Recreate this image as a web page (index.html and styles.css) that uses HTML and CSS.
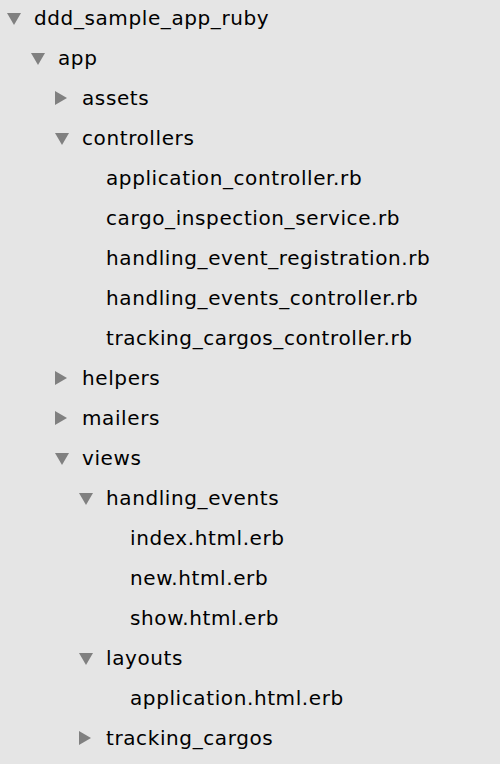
FILE: index.html
```html
<!DOCTYPE html>
<html>
<head>
<meta charset="utf-8">
<link rel="stylesheet" href="styles.css">
</head>
<body>
<ul class="tree">
  <li class="row l0"><svg class="tri" viewBox="0 0 16 16"><polygon points="1,3 15,3 8,15"/></svg><span>ddd_sample_app_ruby</span></li>
  <li class="row l1"><svg class="tri" viewBox="0 0 16 16"><polygon points="1,3 15,3 8,15"/></svg><span>app</span></li>
  <li class="row l2"><svg class="tri" viewBox="0 0 16 16"><polygon points="1,1 13,8 1,15"/></svg><span>assets</span></li>
  <li class="row l2"><svg class="tri" viewBox="0 0 16 16"><polygon points="1,3 15,3 8,15"/></svg><span>controllers</span></li>
  <li class="row l3"><span class="sp"></span><span>application_controller.rb</span></li>
  <li class="row l3"><span class="sp"></span><span>cargo_inspection_service.rb</span></li>
  <li class="row l3"><span class="sp"></span><span>handling_event_registration.rb</span></li>
  <li class="row l3"><span class="sp"></span><span>handling_events_controller.rb</span></li>
  <li class="row l3"><span class="sp"></span><span>tracking_cargos_controller.rb</span></li>
  <li class="row l2"><svg class="tri" viewBox="0 0 16 16"><polygon points="1,1 13,8 1,15"/></svg><span>helpers</span></li>
  <li class="row l2"><svg class="tri" viewBox="0 0 16 16"><polygon points="1,1 13,8 1,15"/></svg><span>mailers</span></li>
  <li class="row l2"><svg class="tri" viewBox="0 0 16 16"><polygon points="1,3 15,3 8,15"/></svg><span>views</span></li>
  <li class="row l3"><svg class="tri" viewBox="0 0 16 16"><polygon points="1,3 15,3 8,15"/></svg><span>handling_events</span></li>
  <li class="row l4"><span class="sp"></span><span>index.html.erb</span></li>
  <li class="row l4"><span class="sp"></span><span>new.html.erb</span></li>
  <li class="row l4"><span class="sp"></span><span>show.html.erb</span></li>
  <li class="row l3"><svg class="tri" viewBox="0 0 16 16"><polygon points="1,3 15,3 8,15"/></svg><span>layouts</span></li>
  <li class="row l4"><span class="sp"></span><span>application.html.erb</span></li>
  <li class="row l3"><svg class="tri" viewBox="0 0 16 16"><polygon points="1,1 13,8 1,15"/></svg><span>tracking_cargos</span></li>
</ul>
</body>
</html>
```
FILE: styles.css
```css
html, body {
  margin: 0;
  padding: 0;
  background: #e5e5e5;
  height: 100%;
  overflow: hidden;
}
.tree {
  list-style: none;
  margin: 0;
  padding: 0 0 0 6px;
  font-family: "DejaVu Sans", sans-serif;
  font-size: 20px;
  letter-spacing: 0.6px;
  color: #000;
}
.row {
  display: flex;
  align-items: center;
  height: 40px;
  margin-top: -2px;
  margin-bottom: 2px;
}
.tri, .sp {
  width: 16px;
  height: 16px;
  flex: none;
  margin-right: 12px;
}
.tri polygon { fill: #808080; }
.l1 { padding-left: 24px; }
.l2 { padding-left: 48px; }
.l3 { padding-left: 72px; }
.l4 { padding-left: 96px; }
```
